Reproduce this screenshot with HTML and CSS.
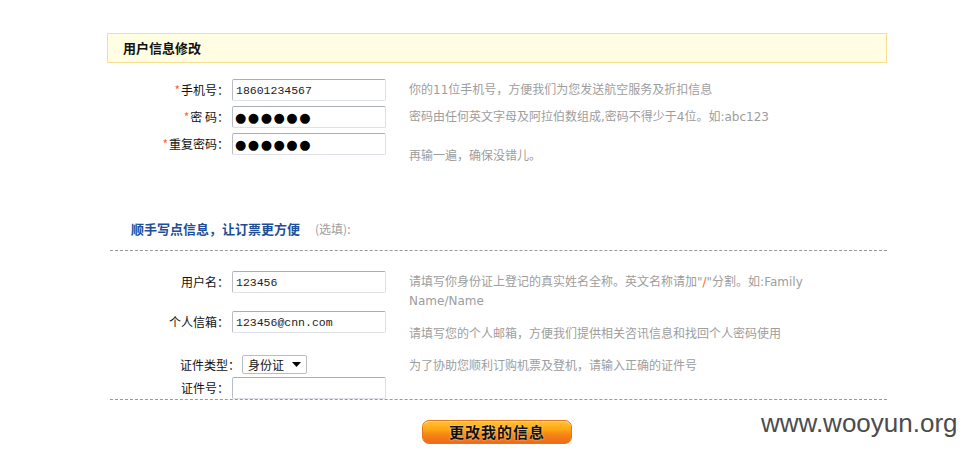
FILE: index.html
```html
<!DOCTYPE html>
<html>
<head>
    <title>用户信息修改</title>
    <link rel="stylesheet" href="styles.css">
</head>
<body>
    <div class="page">
        <div class="title-bar">用户信息修改</div>

        <div class="form-block first">
            <div class="row">
                <label class="lbl"><span class="req">*</span>手机号：</label>
                <input class="field" type="text" value="18601234567">
                <p class="hint">你的11位手机号，方便我们为您发送航空服务及折扣信息</p>
            </div>
            <div class="row">
                <label class="lbl"><span class="req">*</span>密&nbsp;码：</label>
                <input class="field dots" type="text" value="●●●●●●">
                <p class="hint">密码由任何英文字母及阿拉伯数组成,密码不得少于4位。如:abc123</p>
            </div>
            <div class="row">
                <label class="lbl"><span class="req">*</span>重复密码：</label>
                <input class="field dots" type="text" value="●●●●●●">
                <p class="hint low">再输一遍，确保没错儿。</p>
            </div>
        </div>

        <div class="section-head">
            <b>顺手写点信息，让订票更方便</b><span class="opt">(选填):</span>
        </div>

        <div class="form-block second">
            <div class="row">
                <label class="lbl">用户名：</label>
                <input class="field" type="text" value="123456">
                <p class="hint wrap">请填写你身份证上登记的真实姓名全称。英文名称请加"<span class="slash">/</span>"分割。如:Family Name/Name</p>
            </div>
            <div class="row">
                <label class="lbl">个人信箱：</label>
                <input class="field" type="text" value="123456@cnn.com">
                <p class="hint email">请填写您的个人邮箱，方便我们提供相关咨讯信息和找回个人密码使用</p>
            </div>
            <div class="row id-type">
                <label class="lbl">证件类型：</label>
                <div class="select-box">
                    <select class="picker">
                        <option>身份证</option>
                        <option>护照</option>
                        <option>其他</option>
                    </select>
                    <svg class="caret" width="9" height="5" viewBox="0 0 9 5"><path d="M0 0H9L4.5 5Z" fill="#000"/></svg>
                </div>
                <p class="hint">为了协助您顺利订购机票及登机，请输入正确的证件号</p>
            </div>
            <div class="row id-no">
                <label class="lbl">证件号：</label>
                <input class="field" type="text" value="">
            </div>
        </div>

        <div class="actions">
            <button class="submit">更改我的信息</button>
        </div>
    </div>

    <div class="watermark">www.wooyun.org</div>
</body>
</html>
```

FILE: styles.css
```css
body {
    margin: 0;
    font-family: "DejaVu Sans", "Noto Sans CJK SC", sans-serif;
    font-size: 12px;
    color: #222;
    background: #fff;
}

.page {
    width: 780px;
    margin: 33px 0 0 107px;
}

.title-bar {
    height: 28px;
    line-height: 28px;
    padding-left: 15px;
    border: 1px solid #f7df91;
    background-color: #fffde2;
    font-family: "Noto Sans CJK SC", sans-serif;
    font-size: 13px;
    font-weight: bold;
    color: #111;
}

.form-block.first {
    margin-top: 16px;
}

.row {
    display: grid;
    grid-template-columns: 125px 154px 1fr;
    align-items: start;
}

.form-block.first .row {
    margin-bottom: 5px;
}

.lbl {
    height: 22px;
    line-height: 22px;
    padding-right: 3px;
    text-align: right;
    font-family: "Noto Sans CJK SC", sans-serif;
    color: #111;
}

.req {
    color: #f26c1f;
    margin-right: 1px;
}

.field {
    box-sizing: border-box;
    width: 154px;
    height: 22px;
    margin: 0;
    padding: 0 3px;
    border: 1px solid #dde0e6;
    border-top-color: #a9adb6;
    border-left-color: #b9bdc5;
    border-radius: 2px;
    font-family: "Liberation Mono", monospace;
    font-size: 11.5px;
    color: #222;
    outline: none;
}

.field.dots {
    font-family: "DejaVu Sans", sans-serif;
    font-size: 13px;
    letter-spacing: 1.5px;
    padding-left: 2px;
    color: #000;
}

.hint {
    margin: 0 0 0 23px;
    line-height: 22px;
    color: #9d9d9d;
    white-space: nowrap;
}

.hint.low {
    padding-top: 12px;
}

.hint.wrap {
    white-space: normal;
    width: 400px;
    line-height: 19px;
    padding-top: 2px;
}

.hint.email {
    line-height: 19px;
    padding-top: 14px;
}

.slash {
    color: #f26c1f;
}

.section-head {
    margin-top: 52px;
    padding: 0 0 11px 21px;
    line-height: 20px;
    border-bottom: 1px dashed #999;
    margin-left: 3px;
    font-family: "Noto Sans CJK SC", sans-serif;
}

.section-head b {
    color: #1d4e96;
    font-size: 13px;
}

.opt {
    margin-left: 15px;
    color: #9d9d9d;
}

.form-block.second {
    margin-left: 3px;
    padding-top: 20px;
    border-bottom: 1px dashed #999;
}

.form-block.second .row {
    grid-template-columns: 122px 154px 1fr;
}

.form-block.second .row.id-type {
    margin-top: 11px;
    grid-template-columns: 130px 154px 1fr;
}

.row.id-type .lbl,
.row.id-type .hint {
    height: 19px;
    line-height: 19px;
}

.row.id-type .hint {
    padding-top: 2px;
    margin-left: 15px;
}

.row.id-type .lbl {
    padding-right: 0;
}

.select-box {
    position: relative;
    margin-left: 2px;
    width: 65px;
    height: 19px;
}

.picker {
    appearance: none;
    -webkit-appearance: none;
    box-sizing: border-box;
    width: 65px;
    height: 19px;
    margin: 0;
    padding: 0 0 0 5px;
    border: 1px solid #b8bcc6;
    border-radius: 2px;
    background: #fff;
    font-family: "Noto Sans CJK SC", sans-serif;
    font-size: 12px;
    color: #111;
    outline: none;
}

.caret {
    position: absolute;
    right: 6px;
    top: 7px;
    pointer-events: none;
}

.row.id-no {
    margin-top: 1px;
}

.actions {
    text-align: center;
    padding-top: 20px;
}

.submit {
    width: 150px;
    height: 24px;
    padding: 0;
    border: 1px solid #e8741a;
    border-radius: 7px;
    background: linear-gradient(#ffc23a 0%, #ffa511 40%, #f68615 60%, #ee6a1a 100%);
    box-shadow: inset 0 1px 0 #ffe08a;
    font-family: "Noto Sans CJK SC", sans-serif;
    font-size: 15px;
    font-weight: bold;
    letter-spacing: 1px;
    line-height: 22px;
    color: #111;
    text-shadow: 0 0 2px #ffe9b0;
    cursor: pointer;
}

.watermark {
    position: absolute;
    left: 761px;
    top: 408px;
    font-family: "Liberation Sans", Arial, sans-serif;
    font-size: 26px;
    color: #4c4c4c;
}
```
